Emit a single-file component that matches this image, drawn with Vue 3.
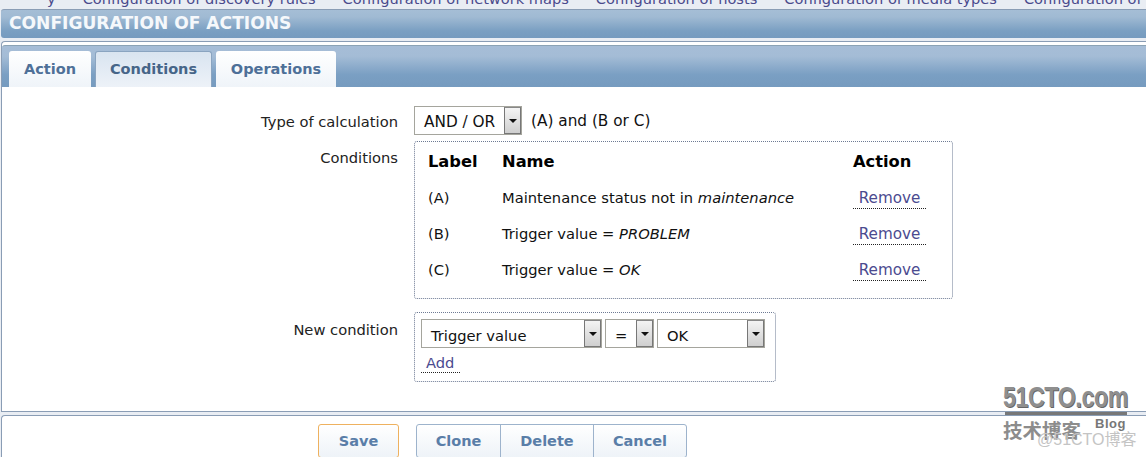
<script setup>
const navItems = [
  'y',
  'Configuration of discovery rules',
  'Configuration of network maps',
  'Configuration of hosts',
  'Configuration of media types',
  'Configuration of'
]

const conditions = [
  { label: '(A)', text: 'Maintenance status not in ', value: 'maintenance' },
  { label: '(B)', text: 'Trigger value = ', value: 'PROBLEM' },
  { label: '(C)', text: 'Trigger value = ', value: 'OK' }
]

const newCondition = [
  { text: 'Trigger value', width: 181 },
  { text: '=', width: 49 },
  { text: 'OK', width: 108 }
]
</script>

<template>
  <div class="page">
    <div class="nav">
      <a v-for="item in navItems" :key="item" class="nav-link">{{ item }}</a>
    </div>
    <div class="title">CONFIGURATION OF ACTIONS</div>

    <div class="panel">
      <div class="tabs">
        <div class="tab tab-action">Action</div>
        <div class="tab tab-current">Conditions</div>
        <div class="tab tab-ops">Operations</div>
      </div>

      <div class="form">
        <div class="row row-calc">
          <div class="label">Type of calculation</div>
          <div class="calc">
            <div class="select select-calc">
              <span class="select-text">AND / OR</span>
              <span class="arrow"><i></i></span>
            </div>
            <span>(A) and (B or C)</span>
          </div>
        </div>

        <div class="row row-cond">
          <div class="label">Conditions</div>
          <div class="box cond-box">
            <div class="cond-line cond-head">
              <span class="col-label">Label</span>
              <span class="col-name">Name</span>
              <span>Action</span>
            </div>
            <div v-for="c in conditions" :key="c.label" class="cond-line cond-row">
              <span class="col-label">{{ c.label }}</span>
              <span class="col-name">{{ c.text }}<em>{{ c.value }}</em></span>
              <a class="link remove">Remove</a>
            </div>
          </div>
        </div>

        <div class="row row-new">
          <div class="label">New condition</div>
          <div class="box new-box">
            <div class="selects">
              <div
                v-for="s in newCondition"
                :key="s.text"
                class="select"
                :style="{ width: s.width + 'px' }"
              >
                <span class="select-text">{{ s.text }}</span>
                <span class="arrow"><i></i></span>
              </div>
            </div>
            <a class="link add">Add</a>
          </div>
        </div>
      </div>
    </div>

    <div class="footer">
      <button class="btn btn-save">Save</button>
      <div class="btn-group">
        <button class="btn">Clone</button>
        <button class="btn">Delete</button>
        <button class="btn">Cancel</button>
      </div>
    </div>

    <div class="watermark">
      <div class="wm-main">51CTO.com</div>
      <div class="wm-rule"></div>
      <div class="wm-sub">技术博客<span class="wm-blog">Blog</span></div>
      <div class="wm-at">@51CTO博客</div>
    </div>
  </div>
</template>

<style>
html, body {
  margin: 0;
  background: #fff;
  overflow: hidden;
}
</style>

<style scoped>
.page {
  position: relative;
  width: 1146px;
  height: 457px;
  overflow: hidden;
  background: #e9edf3;
  font-family: "DejaVu Sans", Verdana, sans-serif;
  font-size: 14.7px;
  color: #111;
}

.nav {
  display: flex;
  align-items: flex-end;
  gap: 27px;
  height: 9px;
  padding-left: 47px;
  overflow: hidden;
  white-space: nowrap;
  font-size: 14.6px;
  color: #4a4a8c;
}

.nav-link {
  flex: none;
  line-height: 14px;
  margin-bottom: 3px;
}

.title {
  box-sizing: border-box;
  height: 29px;
  margin-left: 1px;
  padding: 3px 0 0 8px;
  border-top: 1px solid #8a9db5;
  border-radius: 3px 0 0 3px;
  background: linear-gradient(#a5bed6 0%, #a0bad3 25%, #7a9fc2 75%, #769bbf 100%);
  color: #f5f8fb;
  font-size: 17.1px;
  font-weight: bold;
  line-height: 20px;
}

.panel {
  box-sizing: border-box;
  height: 371px;
  margin: 3px 0 0 1px;
  padding-top: 3px;
  border: 1px solid #8a9db5;
  border-right: 0;
  border-radius: 4px 0 0 0;
  background: #fff;
}

.tabs {
  box-sizing: border-box;
  display: flex;
  align-items: flex-end;
  height: 42px;
  padding-left: 7px;
  border-top: 1px solid #8ba3b5;
  border-radius: 3px 0 0 0;
  background: linear-gradient(#a6bdd7 0%, #a4bcd6 25%, #7a9fc3 70%, #769bbf 100%);
}

.tab {
  box-sizing: border-box;
  height: 36px;
  text-align: center;
  border-radius: 3px 3px 0 0;
  background: linear-gradient(#fff, #eff4f9);
  color: #4e7098;
  font-size: 14.5px;
  font-weight: bold;
  line-height: 36px;
}

.tab-action { width: 82px; }
.tab-ops { width: 120px; margin-left: 4px; }

.tab-current {
  width: 117px;
  margin-left: 4px;
  border: 1px solid #8aa4c0;
  border-bottom: 0;
  background: linear-gradient(#d9e4f0, #edf2f8);
  color: #466588;
  line-height: 34px;
}

.form {
  padding-top: 19px;
}

.row {
  display: flex;
  align-items: flex-start;
  gap: 16px;
}

.label {
  flex: none;
  width: 396px;
  text-align: right;
  line-height: 18px;
  color: #222;
}

.row-calc .label { padding-top: 7px; }
.row-cond { margin-top: 6px; }
.row-cond .label { padding-top: 8px; }
.row-new { margin-top: 13px; }
.row-new .label { padding-top: 9px; }

.calc {
  display: flex;
  align-items: center;
  gap: 9px;
  font-size: 15.3px;
}

.select {
  box-sizing: border-box;
  display: flex;
  justify-content: space-between;
  height: 29px;
  border: 1px solid #a5a59d;
  background: #fff;
}

.select-calc { width: 108px; }

.select-text {
  padding: 2px 0 0 9px;
  line-height: 27px;
}

.arrow {
  box-sizing: border-box;
  display: flex;
  align-items: center;
  justify-content: center;
  width: 17px;
  height: 27px;
  border: 1px solid #777;
  border-top-color: #888;
  background: linear-gradient(#f4f4f4, #cfcfcf);
}

.arrow i {
  width: 0;
  height: 0;
  border-left: 4px solid transparent;
  border-right: 4px solid transparent;
  border-top: 4px solid #111;
}

.box {
  box-sizing: border-box;
  border: 1px dotted #6d7a93;
  border-radius: 3px;
}

.cond-box {
  width: 539px;
  height: 158px;
  padding: 8px 0 0 13px;
}

.cond-line {
  display: flex;
  align-items: center;
  height: 36px;
}

.cond-head {
  height: 23px;
  margin-bottom: 7px;
  font-size: 16.3px;
  font-weight: bold;
  color: #000;
}

.cond-row span {
  margin-top: -2px;
}

.col-label { width: 74px; }
.col-name { width: 351px; }

.link {
  color: #4b4b8f;
  border-bottom: 1px dotted #222;
}

.remove {
  width: 73px;
  padding: 1px 0;
  text-align: center;
  font-size: 15.2px;
  line-height: 18px;
}

.new-box {
  width: 362px;
  height: 70px;
  padding: 6px 0 0 6px;
}

.selects {
  display: flex;
  gap: 3px;
}

.add {
  display: inline-block;
  width: 39px;
  margin-top: 5px;
  padding-left: 5px;
  box-sizing: border-box;
  line-height: 19px;
}

.footer {
  box-sizing: border-box;
  display: flex;
  align-items: flex-start;
  gap: 17px;
  height: 60px;
  margin: 3px 0 0 1px;
  padding: 8px 0 0 316px;
  border: 1px solid #8a9db5;
  border-right: 0;
  border-radius: 4px 0 0 0;
  background: #fff;
}

.btn {
  box-sizing: border-box;
  width: 81px;
  height: 34px;
  padding: 0;
  border: 1px solid #9db3cc;
  border-radius: 3px;
  background: linear-gradient(#fff, #eef3f8);
  color: #5a7ea8;
  font-family: "DejaVu Sans", Verdana, sans-serif;
  font-size: 14.5px;
  font-weight: bold;
}

.btn-save {
  border-color: #eeb15f;
}

.btn-group {
  display: flex;
}

.btn-group .btn {
  width: 85px;
  border-radius: 0;
}

.btn-group .btn + .btn {
  width: 94px;
  margin-left: -1px;
}

.btn-group .btn:first-child {
  border-radius: 3px 0 0 3px;
}

.btn-group .btn:last-child {
  border-radius: 0 3px 3px 0;
}

/* watermark sits over the page */
.watermark {
  position: absolute;
  left: 1003px;
  top: 383px;
  width: 143px;
  height: 74px;
  color: #8f8f8f;
}

.wm-main {
  font-family: "Liberation Sans", sans-serif;
  font-size: 29px;
  font-weight: bold;
  line-height: 29px;
  letter-spacing: -0.5px;
  transform: scaleX(0.8);
  transform-origin: left top;
  white-space: nowrap;
  text-shadow: 1px 1px 0 #666;
}

.wm-rule {
  width: 122px;
  height: 3px;
  margin: 0 0 0 2px;
  background: #777;
}

.wm-sub {
  display: flex;
  align-items: flex-start;
  margin-top: 3px;
  font-family: "Noto Sans CJK SC", sans-serif;
  font-size: 19.5px;
  font-weight: bold;
  line-height: 24px;
  color: #8c8c8c;
}

.wm-blog {
  margin: -2px 0 0 14px;
  font-family: "Liberation Sans", sans-serif;
  font-size: 13px;
  letter-spacing: 0.5px;
  line-height: 16px;
  color: #777;
}

.wm-at {
  position: absolute;
  left: 34px;
  top: 48px;
  font-family: "Liberation Sans", "Noto Sans CJK SC", sans-serif;
  font-size: 16px;
  line-height: 18px;
  color: #c4c4c4;
  white-space: nowrap;
}
</style>
